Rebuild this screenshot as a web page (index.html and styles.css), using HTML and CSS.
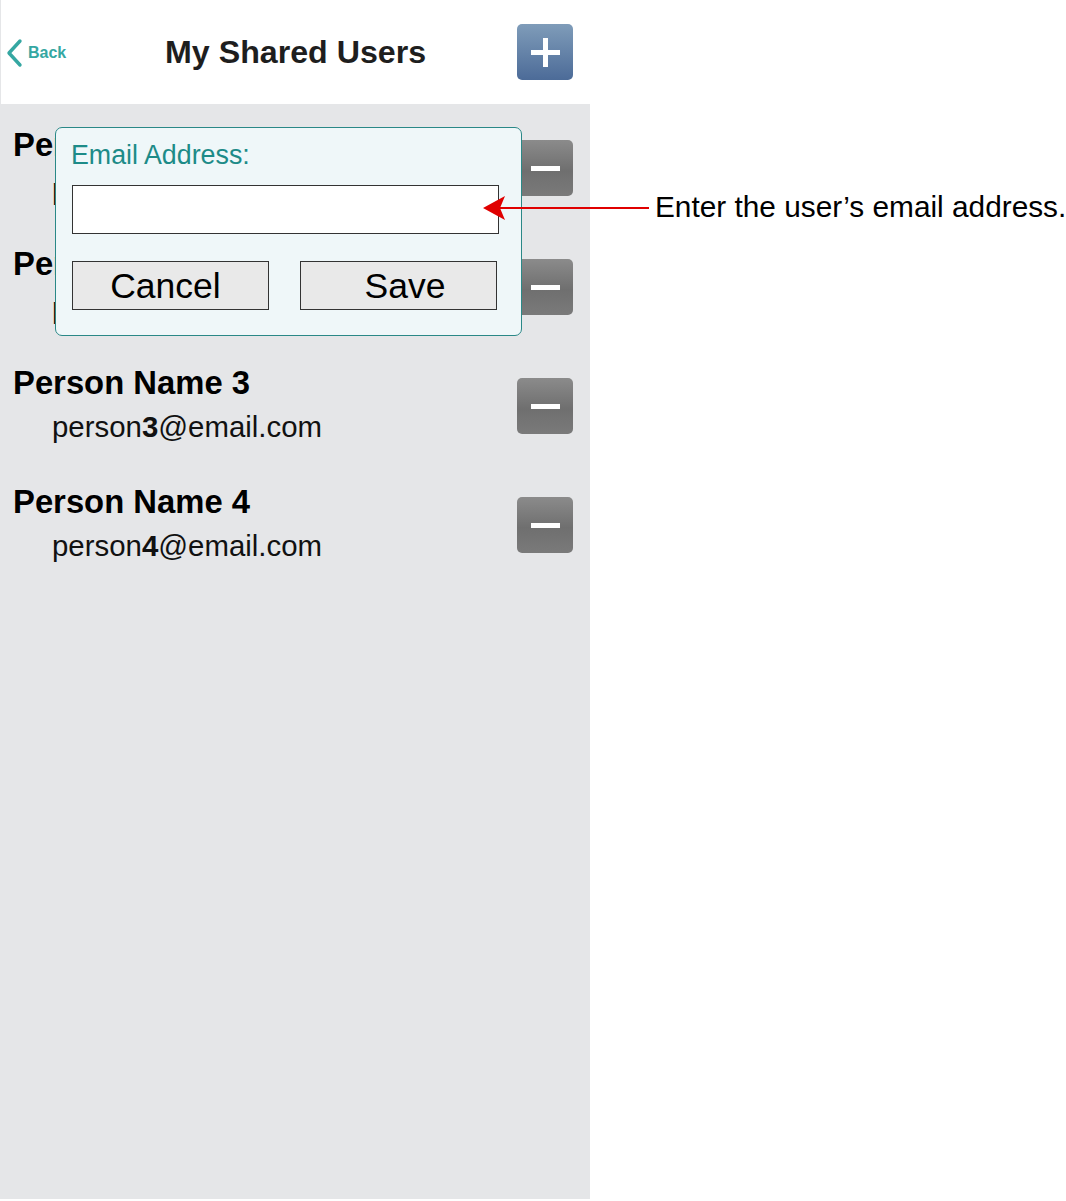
FILE: index.html
```html
<!DOCTYPE html>
<html>
<head>
<meta charset="utf-8">
<link rel="stylesheet" href="styles.css">
</head>
<body>
<div class="page">
  <div class="phone">
    <header class="header">
      <a class="back">
        <svg class="chev" width="19" height="30" viewBox="0 0 19 30"><path d="M15 3 L4 15 L15 27" fill="none" stroke="#35a7a2" stroke-width="3.4" stroke-linecap="round" stroke-linejoin="round"/></svg>
        <span>Back</span>
      </a>
      <h1 class="title">My Shared Users</h1>
      <button class="btn-icon btn-add"><span class="plus-h"></span><span class="plus-v"></span></button>
    </header>
    <main class="list">
      <div class="row">
        <div class="info"><div class="name">Person Name 1</div><div class="email">person<b>1</b>@email.com</div></div>
        <button class="btn-icon btn-remove"><span class="minus"></span></button>
      </div>
      <div class="row">
        <div class="info"><div class="name">Person Name 2</div><div class="email">person<b>2</b>@email.com</div></div>
        <button class="btn-icon btn-remove"><span class="minus"></span></button>
      </div>
      <div class="row">
        <div class="info"><div class="name">Person Name 3</div><div class="email">person<b>3</b>@email.com</div></div>
        <button class="btn-icon btn-remove"><span class="minus"></span></button>
      </div>
      <div class="row">
        <div class="info"><div class="name">Person Name 4</div><div class="email">person<b>4</b>@email.com</div></div>
        <button class="btn-icon btn-remove"><span class="minus"></span></button>
      </div>
    </main>
    <div class="dialog">
      <label class="dlg-label">Email Address:</label>
      <div class="dlg-input"></div>
      <div class="dlg-actions">
        <button class="dlg-btn dlg-cancel">Cancel</button>
        <button class="dlg-btn dlg-save">Save</button>
      </div>
    </div>
  </div>
  <div class="callout">
    <svg class="arrow" width="166" height="26" viewBox="0 0 166 26"><path d="M0 13 L22 1 L17 13 L22 25 Z" fill="#e00000"/><rect x="16" y="12" width="150" height="2" fill="#e00000"/></svg>
    <span class="callout-text">Enter the user’s email address.</span>
  </div>
</div>
</body>
</html>
```

FILE: styles.css
```css
* { box-sizing: border-box; }
html, body { margin: 0; padding: 0; background: #fff; }
body { font-family: "Liberation Sans", Arial, sans-serif; color: #000; }

.page { position: relative; width: 1066px; height: 1201px; }

.phone {
  position: relative;
  width: 590px;
  height: 1199px;
  background: #e5e6e8;
  border-left: 1px solid #e5e6e8;
  display: flex;
  flex-direction: column;
}

.header {
  height: 104px;
  background: #fff;
  display: flex;
  align-items: center;
  padding: 0 17px 0 4px;
  position: relative;
}
.back {
  display: flex;
  align-items: center;
  gap: 4px;
  color: #35a7a2;
  font-weight: bold;
  font-size: 16px;
  width: 152px;
  margin-top: 2px;
}
.chev { display: block; }
.title {
  flex: 1;
  margin: 0 0 0 8px;
  font-size: 32.2px;
  font-weight: bold;
  color: #1e1e1e;
  text-align: left;
}

.btn-icon {
  width: 56px;
  height: 56px;
  border: none;
  border-radius: 5px;
  padding: 0;
  position: relative;
  display: flex;
  align-items: center;
  justify-content: center;
  flex: none;
}
.btn-add {
  background: linear-gradient(#7f9cb9, #4c6b98);
}
.plus-h, .plus-v { position: absolute; background: #fff; }
.plus-h { width: 29px; height: 5px; }
.plus-v { width: 5px; height: 29px; }

.btn-remove {
  background: linear-gradient(#8b8b8b, #6f6f6f 55%, #7a7a7a);
  margin-top: 36px;
}
.minus { width: 29px; height: 5px; background: #fff; }

.list { display: flex; flex-direction: column; padding: 0 17px 0 12px; }
.row {
  height: 119px;
  display: flex;
  justify-content: space-between;
  align-items: flex-start;
}
.info { padding-top: 24px; }
.name { font-size: 32.8px; font-weight: bold; line-height: 34px; }
.email { font-size: 29.4px; line-height: 30px; margin-top: 12px; padding-left: 39px; color: #111; }
.email b { font-weight: bold; }

.dialog {
  position: absolute;
  left: 54px;
  top: 127px;
  width: 467px;
  height: 209px;
  background: #eff7f9;
  border: 1px solid #2a8887;
  border-radius: 7px;
  padding: 10px 22px 0 16px;
}
.dlg-label { display: block; color: #1d8b88; font-size: 26.8px; line-height: 35px; margin-left: -1px; }
.dlg-input {
  margin-top: 12px;
  width: 427px;
  height: 49px;
  background: #fff;
  border: 1px solid #333;
}
.dlg-actions { display: flex; gap: 31px; margin-top: 27px; }
.dlg-btn {
  width: 197px;
  height: 49px;
  background: #e9e9e9;
  border: 1px solid #333;
  font-family: "Liberation Sans", Arial, sans-serif;
  font-size: 35.5px;
  line-height: 1;
  color: #000;
  padding: 2px 0 0;
}
.dlg-cancel { padding-right: 10px; }
.dlg-save { padding-left: 13px; }

.callout {
  position: absolute;
  left: 483px;
  top: 195px;
  display: flex;
  align-items: center;
  gap: 6px;
}
.arrow { display: block; }
.callout-text { font-size: 29.8px; line-height: 26px; color: #000; white-space: nowrap; margin-top: -2px; }
```
